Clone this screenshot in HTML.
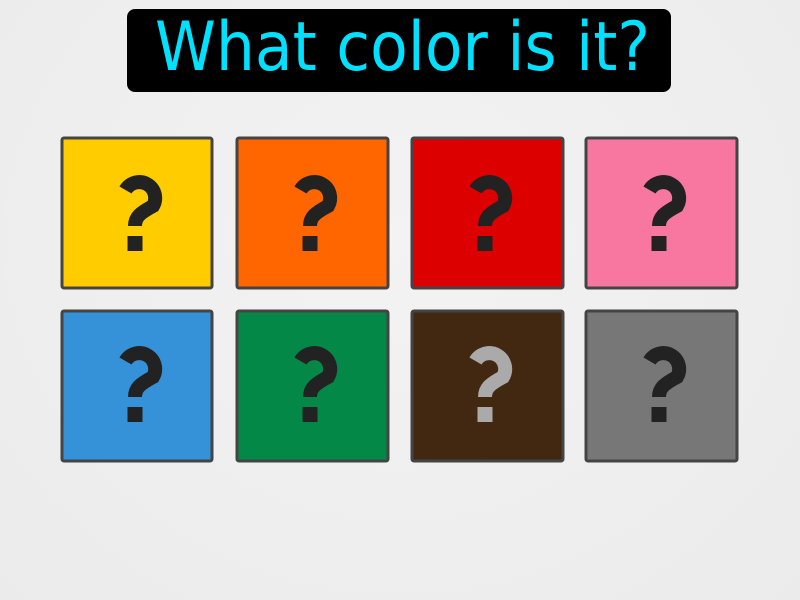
<!DOCTYPE html>
<html><head><meta charset="utf-8"><style>
html,body{margin:0;padding:0;width:800px;height:600px;overflow:hidden;background:radial-gradient(ellipse at 50% 40%,#f3f3f3,#ebebeb);}
</style></head><body>
<svg width="800" height="600" xmlns="http://www.w3.org/2000/svg" style="position:absolute;left:0;top:0">
<defs>
<g id="q">
<path d="M125.5,190 A15.5,15.5 0 1 1 153,206 C140,213 135,217 135,226" fill="none" stroke-width="14" stroke-linecap="butt"/>
<rect x="127.5" y="236" width="15" height="15" stroke="none"/>
</g>
</defs>
<rect x="127" y="9" width="544" height="83" rx="8" fill="#000"/>
<text x="155" y="70" font-family="DejaVu Sans, sans-serif" font-size="68" fill="#00E0FF" textLength="495" lengthAdjust="spacingAndGlyphs">What color is it?</text>
<g stroke="#444" stroke-width="3">
<rect x="62" y="138" width="150" height="150" rx="2" fill="#FFCC00"/>
<rect x="237" y="138" width="151" height="150" rx="2" fill="#FF6600"/>
<rect x="412" y="138" width="151" height="150" rx="2" fill="#DD0000"/>
<rect x="586" y="138" width="151" height="150" rx="2" fill="#F877A0"/>
<rect x="62" y="311" width="150" height="150" rx="2" fill="#3592D9"/>
<rect x="237" y="311" width="151" height="150" rx="2" fill="#038847"/>
<rect x="412" y="311" width="151" height="150" rx="2" fill="#422811"/>
<rect x="586" y="311" width="151" height="150" rx="2" fill="#777777"/>
</g>
<g stroke="#222" fill="#222">
<use href="#q"/>
<use href="#q" transform="translate(175,0)"/>
<use href="#q" transform="translate(350,0)"/>
<use href="#q" transform="translate(524,0)"/>
<use href="#q" transform="translate(0,171)"/>
<use href="#q" transform="translate(175,171)"/>
<use href="#q" transform="translate(524,171)"/>
</g>
<g stroke="#aaa" fill="#aaa"><use href="#q" transform="translate(350,171)"/></g>
</svg>
</body></html>
